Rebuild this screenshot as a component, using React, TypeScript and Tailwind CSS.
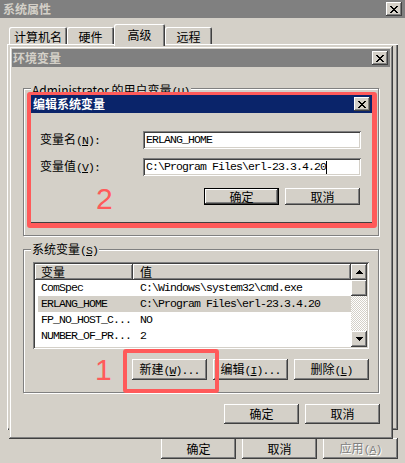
import React from "react";

const CJK = "font-['Noto_Sans_CJK_SC',sans-serif]";
const MONO = "font-['Liberation_Mono',monospace] text-[11.5px] tracking-[-0.9px]";
const RAISED =
  "shadow-[inset_-1px_-1px_#404040,inset_1px_1px_#ffffff,inset_-2px_-2px_#808080,inset_2px_2px_#d4d0c8]";
const SUNKEN =
  "shadow-[inset_1px_1px_#808080,inset_-1px_-1px_#ffffff,inset_2px_2px_#404040,inset_-2px_-2px_#d4d0c8]";
const FRAME =
  "shadow-[inset_-1px_-1px_#404040,inset_1px_1px_#d4d0c8,inset_-2px_-2px_#808080,inset_2px_2px_#ffffff]";
const ETCH = "border border-[#808080] shadow-[inset_1px_1px_#ffffff,1px_1px_#ffffff]";

const X_PIXELS: [number, number][] = [
  [0, 0], [1, 0], [6, 0], [7, 0],
  [1, 1], [2, 1], [5, 1], [6, 1],
  [2, 2], [3, 2], [4, 2], [5, 2],
  [3, 3], [4, 3],
  [2, 4], [3, 4], [4, 4], [5, 4],
  [1, 5], [2, 5], [5, 5], [6, 5],
  [0, 6], [1, 6], [6, 6], [7, 6],
];

function XGlyph() {
  return (
    <svg width="8" height="7" viewBox="0 0 8 7" shapeRendering="crispEdges">
      {X_PIXELS.map(([x, y], i) => (
        <rect key={i} x={x} y={y} width="1" height="1" fill="#000" />
      ))}
    </svg>
  );
}

function CloseBtn() {
  return (
    <div className={`w-[16px] h-[14px] bg-[#d4d0c8] ${RAISED} flex items-center justify-center pr-[1px]`}>
      <XGlyph />
    </div>
  );
}

function Arrow({ down = false }: { down?: boolean }) {
  const rows = down
    ? [[0, 7], [1, 5], [2, 3], [3, 1]]
    : [[3, 1], [2, 3], [1, 5], [0, 7]];
  return (
    <svg width="7" height="4" viewBox="0 0 7 4" shapeRendering="crispEdges">
      {rows.map(([x, w], i) => (
        <rect key={i} x={x} y={i} width={w} height="1" fill="#000" />
      ))}
    </svg>
  );
}

function Btn({
  children,
  h,
  def = false,
}: {
  children: React.ReactNode;
  h: string;
  def?: boolean;
}) {
  return (
    <div
      className={`w-[75px] ${h} bg-[#d4d0c8] flex items-center justify-center ${
        def ? "border border-black" : ""
      } ${RAISED}`}
    >
      <span className={`${CJK} text-[12px] leading-[14px] whitespace-nowrap`}>{children}</span>
    </div>
  );
}

const rows = [
  { k: "ComSpec", v: "C:\\Windows\\system32\\cmd.exe", sel: false },
  { k: "ERLANG_HOME", v: "C:\\Program Files\\erl-23.3.4.20", sel: true },
  { k: "FP_NO_HOST_C...", v: "NO", sel: false },
  { k: "NUMBER_OF_PR...", v: "2", sel: false },
];

export default function App() {
  return (
    <div className="relative w-[405px] h-[463px] overflow-hidden bg-[#d4d0c8] text-black">
      {/* Outer window: 系统属性 */}
      <div className="flex flex-col h-full">
        <div className="h-[18px] bg-[#808080] flex items-center justify-between pl-[3px] pr-[3px]">
          <span className={`${CJK} text-[12px] font-bold leading-[18px] text-[#d4d0c8]`}>系统属性</span>
          <CloseBtn />
        </div>

        <div className="mt-[6px] h-[20px] flex items-end pl-[9px] relative z-10">
          <div className={`w-[58px] h-[17px] rounded-t-[2px] bg-[#d4d0c8] shadow-[inset_1px_1px_#ffffff,inset_-1px_0_#404040,inset_-2px_0_#808080] flex items-center justify-center pt-[2px]`}>
            <span className={`${CJK} text-[12px] leading-[14px]`}>计算机名</span>
          </div>
          <div className={`w-[47px] h-[17px] rounded-t-[2px] bg-[#d4d0c8] shadow-[inset_1px_1px_#ffffff,inset_-1px_0_#404040,inset_-2px_0_#808080] flex items-center justify-center pt-[2px]`}>
            <span className={`${CJK} text-[12px] leading-[14px]`}>硬件</span>
          </div>
          <div className={`w-[51px] h-[22px] -mb-[2px] rounded-t-[2px] bg-[#d4d0c8] shadow-[inset_1px_1px_#ffffff,inset_-1px_0_#404040,inset_-2px_0_#808080] flex items-center justify-center`}>
            <span className={`${CJK} text-[12px] leading-[14px]`}>高级</span>
          </div>
          <div className={`w-[47px] h-[17px] rounded-t-[2px] bg-[#d4d0c8] shadow-[inset_1px_1px_#ffffff,inset_-1px_0_#404040,inset_-2px_0_#808080] flex items-center justify-center pt-[2px]`}>
            <span className={`${CJK} text-[12px] leading-[14px]`}>远程</span>
          </div>
        </div>

        <div className="mx-[7px] h-[386px] bg-[#d4d0c8] shadow-[inset_1px_1px_#ffffff,inset_-1px_-1px_#404040,inset_-2px_-2px_#808080]" />

        <div className="mt-[8px] flex justify-end gap-[6px] pr-[7px]">
          <Btn h="h-[21px]">确定</Btn>
          <Btn h="h-[21px]">取消</Btn>
          <div className={`w-[75px] h-[21px] bg-[#d4d0c8] flex items-center justify-center ${RAISED}`}>
            <span className={`${CJK} text-[12px] leading-[14px] text-[#808080] [text-shadow:1px_1px_#ffffff]`}>
              应用<span className={MONO}>(<u>A</u>)</span>
            </span>
          </div>
        </div>
      </div>

      {/* Env window: 环境变量 */}
      <div className={`absolute left-[9px] top-[46px] w-[384px] h-[393px] bg-[#d4d0c8] ${FRAME} p-[3px] flex flex-col`}>
        <div className="h-[18px] bg-[#808080] flex items-center justify-between pl-[1px] pr-[2px]">
          <span className={`${CJK} text-[12px] font-bold leading-[18px] text-[#d4d0c8]`}>环境变量</span>
          <CloseBtn />
        </div>

        <div className="pl-[11px] pr-[10px] flex flex-col">
          {/* user vars group */}
          <div className={`relative mt-[21px] w-[356px] h-[148px] ${ETCH}`}>
            <span className={`absolute left-[7px] -top-[7px] px-[1px] bg-[#d4d0c8] ${CJK} text-[12px] leading-[16px] whitespace-nowrap`}>
              Administrator 的用户变量<span className={MONO}>(<u>U</u>)</span>
            </span>
          </div>

          {/* system vars group */}
          <div className={`relative mt-[13px] w-[356px] h-[144px] ${ETCH} pt-[12px] pl-[9px] pr-[9px] flex flex-col`}>
            <span className={`absolute left-[7px] -top-[9px] px-[1px] bg-[#d4d0c8] ${CJK} text-[12px] leading-[16px] whitespace-nowrap`}>
              系统变量<span className={MONO}>(<u>S</u>)</span>
            </span>

            <div className={`h-[87px] bg-white p-[2px] ${SUNKEN} flex`}>
              <div className="w-[316px] flex flex-col">
                <div className="h-[16px] flex">
                  <div className={`w-[98px] h-full bg-[#d4d0c8] ${RAISED} pl-[6px] flex items-center`}>
                    <span className={`${CJK} text-[12px] leading-[14px]`}>变量</span>
                  </div>
                  <div className={`flex-1 h-full bg-[#d4d0c8] ${RAISED} pl-[7px] flex items-center`}>
                    <span className={`${CJK} text-[12px] leading-[14px]`}>值</span>
                  </div>
                </div>
                {rows.map((r) => (
                  <div key={r.k} className="h-[16px] flex pl-[3px]">
                    <div className={`flex-1 flex items-center ${r.sel ? "bg-[#d4d0c8]" : ""}`}>
                      <span className={`w-[102px] pl-[3px] ${MONO} leading-[16px] whitespace-nowrap`}>{r.k}</span>
                      <span className={`${MONO} leading-[16px] whitespace-nowrap`}>{r.v}</span>
                    </div>
                  </div>
                ))}
              </div>
              <div className="w-[16px] flex flex-col">
                <div className={`h-[16px] bg-[#d4d0c8] ${RAISED} flex items-center justify-center`}>
                  <Arrow />
                </div>
                <div className={`h-[16px] bg-[#d4d0c8] ${RAISED}`} />
                <div className="flex-1 bg-[repeating-conic-gradient(#d4d0c8_0%_25%,#ffffff_0%_50%)] bg-[length:2px_2px] bg-size-[2px_2px]" />
                <div className={`h-[16px] bg-[#d4d0c8] ${RAISED} flex items-center justify-center`}>
                  <Arrow down />
                </div>
              </div>
            </div>

            <div className="mt-[10px] flex justify-end gap-[6px]">
              <Btn h="h-[21px]">
                新建<span className={MONO}>(<u>W</u>)...</span>
              </Btn>
              <Btn h="h-[21px]">
                编辑<span className={MONO}>(<u>I</u>)...</span>
              </Btn>
              <Btn h="h-[21px]">
                删除<span className={MONO}>(<u>L</u>)</span>
              </Btn>
            </div>
          </div>

          <div className="mt-[11px] flex justify-end gap-[6px]">
            <Btn h="h-[20px]">确定</Btn>
            <Btn h="h-[20px]">取消</Btn>
          </div>
        </div>
      </div>

      {/* Edit dialog: 编辑系统变量 (with red annotation frame) */}
      <div className="absolute left-[27px] top-[92px] w-[350px] h-[136px] border-t-[3px] border-l-[4px] border-r-[5px] border-b-[5px] border-[#ff5a5a] rounded-[3px] bg-[#d4d0c8]">
        <div className="relative h-full flex flex-col shadow-[inset_0_-1px_#404040]">
          <div className="h-[18px] bg-[#0a246a] flex items-center justify-between pl-[2px] pr-[2px]">
            <span className={`${CJK} text-[12px] font-bold leading-[18px] text-white`}>编辑系统变量</span>
            <CloseBtn />
          </div>

          <div className="mt-[18px] flex items-center">
            <span className={`w-[112px] pl-[9px] ${CJK} text-[12px] leading-[14px] whitespace-nowrap`}>
              变量名<span className={MONO}>(<u>N</u>):</span>
            </span>
            <div className={`w-[218px] h-[18px] bg-white ${SUNKEN} pl-[3px] flex items-center`}>
              <span className={`${MONO} leading-[14px] whitespace-nowrap`}>ERLANG_HOME</span>
            </div>
          </div>

          <div className="mt-[9px] flex items-center">
            <span className={`w-[112px] pl-[9px] ${CJK} text-[12px] leading-[14px] whitespace-nowrap`}>
              变量值<span className={MONO}>(<u>V</u>):</span>
            </span>
            <div className={`w-[218px] h-[18px] bg-white ${SUNKEN} pl-[3px] flex items-center`}>
              <span className={`${MONO} leading-[14px] whitespace-nowrap`}>C:\Program Files\erl-23.3.4.20</span>
              <span className="w-px h-[13px] bg-black" />
            </div>
          </div>

          <div className="mt-[12px] flex justify-end gap-[6px] pr-[12px]">
            <Btn h="h-[17px]" def>
              确定
            </Btn>
            <Btn h="h-[17px]">取消</Btn>
          </div>

          <span className="absolute left-[65px] top-[89px] font-['Liberation_Sans',sans-serif] text-[30px] leading-none text-[#ff5a5a]">
            2
          </span>
        </div>
      </div>

      {/* Annotation 1 */}
      <span className="absolute left-[95px] top-[355px] font-['Liberation_Sans',sans-serif] text-[30px] leading-none text-[#ff5a5a]">
        1
      </span>
      <div className="absolute left-[123px] top-[349px] w-[96px] h-[44px] border-[4px] border-[#ff5a5a] rounded-[3px]" />
    </div>
  );
}
